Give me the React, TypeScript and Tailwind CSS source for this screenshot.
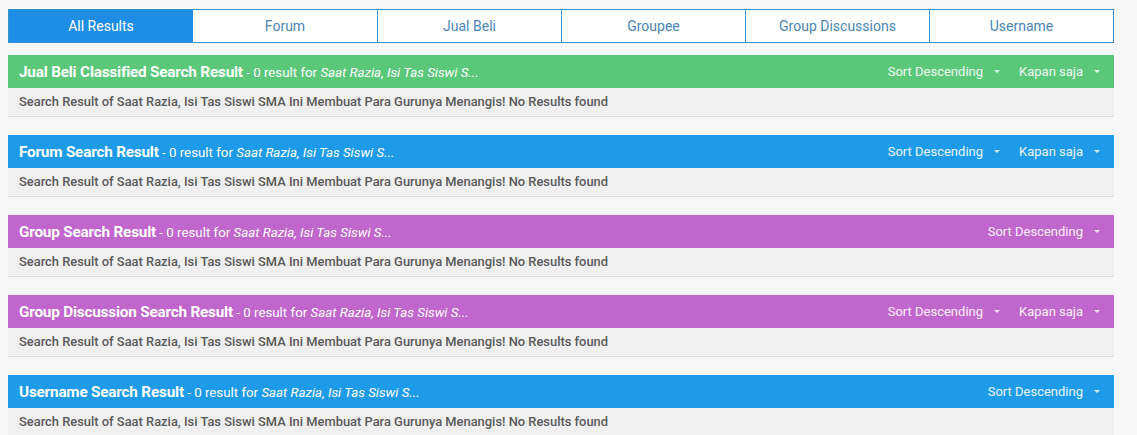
import React from 'react'

const TABS = ['All Results', 'Forum', 'Jual Beli', 'Groupee', 'Group Discussions', 'Username']

type Section = { title: string; color: string; kapan: boolean }

const SECTIONS: Section[] = [
  { title: 'Jual Beli Classified Search Result', color: 'bg-[#5bc879]', kapan: true },
  { title: 'Forum Search Result', color: 'bg-[#1d9be8]', kapan: true },
  { title: 'Group Search Result', color: 'bg-[#c066cd]', kapan: false },
  { title: 'Group Discussion Search Result', color: 'bg-[#c066cd]', kapan: true },
  { title: 'Username Search Result', color: 'bg-[#1d9be8]', kapan: false },
]

function Caret() {
  return <span className="ml-[11px] inline-block h-0 w-0 border-x-[3px] border-t-[3px] border-x-transparent border-t-white/80" />
}

function ResultSection({ s }: { s: Section }) {
  return (
    <div>
      <div className={`flex h-[33px] items-center justify-between pl-[11px] pr-[14px] text-white ${s.color}`}>
        <div className="truncate">
          <span className="text-[15.3px] font-bold tracking-[-0.2px]">{s.title}</span>
          <span className="text-[13.3px]"> - 0 result for </span>
          <span className="text-[13.3px] italic">Saat Razia, Isi Tas Siswi S...</span>
        </div>
        <div className="flex items-center text-[13px] text-white/90">
          <span className="flex items-center">
            Sort Descending
            <Caret />
          </span>
          {s.kapan && (
            <span className="ml-[19px] flex items-center">
              Kapan saja
              <Caret />
            </span>
          )}
        </div>
      </div>
      <div className="flex h-[29px] items-center border-b border-[#dcdcdc] bg-[#f0f0f0] pl-[11px] text-[12.9px] font-medium text-[#5a5a5a]">
        Search Result of Saat Razia, Isi Tas Siswi SMA Ini Membuat Para Gurunya Menangis! No Results found
      </div>
    </div>
  )
}

export default function App() {
  return (
    <div className="min-h-[435px] bg-[#f7f7f7] pt-[9px] pl-[8px] pr-[23px] font-['Roboto','Liberation_Sans',sans-serif]">
      <div className="grid h-[34px] grid-cols-6 border border-[#3a93c8]">
        {TABS.map((t, i) => (
          <div
            key={t}
            className={`flex items-center justify-center text-[14px] ${
              i === 0 ? 'bg-[#1e8de6] text-white' : 'bg-white text-[#4a86b4]'
            } ${i > 1 ? 'border-l border-[#3a93c8]' : ''}`}
          >
            {t}
          </div>
        ))}
      </div>
      <div className="mt-[12px] flex flex-col gap-[18px]">
        {SECTIONS.map((s) => (
          <ResultSection key={s.title} s={s} />
        ))}
      </div>
    </div>
  )
}
